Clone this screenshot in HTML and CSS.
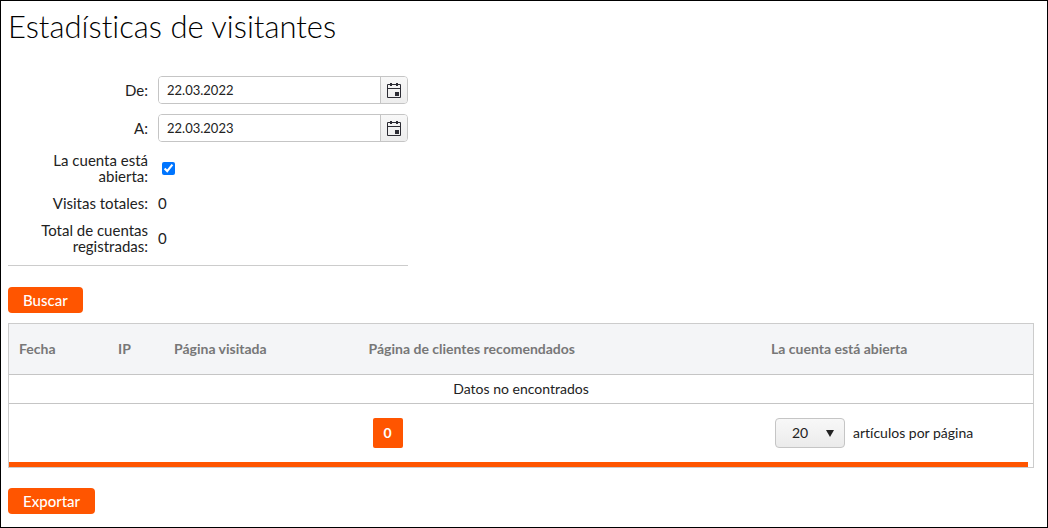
FILE: index.html
```html
<!DOCTYPE html>
<html lang="es">
<head>
  <meta charset="UTF-8">
  <meta name="viewport" content="width=device-width, initial-scale=1.0">
  <title>Estadísticas de visitantes</title>
  <link rel="stylesheet" href="styles.css">
</head>
<body>
  <main class="page">
    <h1>Estadísticas de visitantes</h1>

    <form class="filter" id="filterForm">
      <div class="row">
        <label for="dateFrom">De:</label>
        <div class="datepicker">
          <input type="text" id="dateFrom" value="22.03.2022">
          <button type="button" aria-label="Abrir calendario">
            <svg width="14" height="16" viewBox="0 0 14 16">
              <path d="M.5 2.5h13v13H.5zM.5 6.500h13" fill="none" stroke="#2b2b33"/>
              <path d="M3 1h2v3H3zM9 1h2v3H9zM8 10h4v4H8z" fill="#2b2b33"/>
            </svg>
          </button>
        </div>
      </div>
      <div class="row">
        <label for="dateTo">A:</label>
        <div class="datepicker">
          <input type="text" id="dateTo" value="22.03.2023">
          <button type="button" aria-label="Abrir calendario">
            <svg width="14" height="16" viewBox="0 0 14 16">
              <path d="M.5 2.5h13v13H.5zM.5 6.500h13" fill="none" stroke="#2b2b33"/>
              <path d="M3 1h2v3H3zM9 1h2v3H9zM8 10h4v4H8z" fill="#2b2b33"/>
            </svg>
          </button>
        </div>
      </div>
      <div class="row">
        <label for="accountOpen">La cuenta está abierta:</label>
        <input type="checkbox" id="accountOpen" checked>
      </div>
      <div class="row">
        <span class="name">Visitas totales:</span>
        <span>0</span>
      </div>
      <div class="row">
        <span class="name">Total de cuentas registradas:</span>
        <span>0</span>
      </div>
    </form>

    <button type="submit" form="filterForm" class="btn">Buscar</button>

    <div class="grid">
      <table>
        <colgroup>
          <col class="col-date">
          <col class="col-ip">
          <col class="col-page">
          <col class="col-referral">
          <col class="col-open">
        </colgroup>
        <thead>
          <tr>
            <th>Fecha</th>
            <th>IP</th>
            <th>Página visitada</th>
            <th>Página de clientes recomendados</th>
            <th>La cuenta está abierta</th>
          </tr>
        </thead>
        <tbody>
          <tr>
            <td colspan="5">Datos no encontrados</td>
          </tr>
        </tbody>
        <tfoot>
          <tr>
            <td colspan="3"></td>
            <td><button type="button" class="page-number">0</button></td>
            <td>
              <div class="page-size">
                <div class="select">
                  <select id="pageSize">
                    <option>20</option>
                  </select>
                  <svg width="8" height="7" viewBox="0 0 8 7"><path d="M0 0h8L4 7z" fill="#222"/></svg>
                </div>
                <label for="pageSize">artículos por página</label>
              </div>
            </td>
          </tr>
        </tfoot>
      </table>
      <div class="grid-bar"></div>
    </div>

    <button type="button" class="btn">Exportar</button>
  </main>
</body>
</html>
```

FILE: styles.css
```css
* {
  box-sizing: border-box;
}
body {
  margin: 0;
  background-color: #ffffff;
  color: #222222;
  font-family: Lato, "Open Sans", sans-serif;
  font-size: 15px;
  font-variant-ligatures: none;
  line-height: 16px;
}
input, button, select {
  font-family: inherit;
  color: inherit;
}
.page {
  min-height: 100vh;
  padding: 7px 13px 13px 7px;
  border: 1px solid #000000;
}
h1 {
  margin: 0 0 32px;
  color: #000000;
  font-size: 31px;
  font-weight: 300;
  line-height: 36px;
}

.filter {
  display: flex;
  flex-direction: column;
  gap: 10px;
  width: 400px;
  max-width: 100%;
  padding-bottom: 11px;
  margin-bottom: 21px;
  border-bottom: 1px solid #cccccc;
}
.row {
  display: grid;
  grid-template-columns: 140px 1fr;
  column-gap: 10px;
  align-items: center;
  min-height: 18px;
}
.row label, .row .name {
  padding-left: 20px;
  text-align: right;
}
.row input[type="checkbox"] {
  width: 13px;
  height: 13px;
  margin: 0 4px;
}

.datepicker {
  display: flex;
  height: 28px;
  border: 1px solid #c5c5c5;
  border-radius: 4px;
  overflow: hidden;
}
.datepicker input {
  flex: 1;
  min-width: 0;
  padding: 0 8px;
  border: 0;
  font-size: 13px;
}
.datepicker button {
  display: flex;
  align-items: center;
  justify-content: center;
  width: 27px;
  padding: 0;
  border: 0;
  border-left: 1px solid #c5c5c5;
  background: linear-gradient(#f8f8f8, #ededed);
}

.btn {
  display: block;
  height: 26px;
  padding: 0 15px;
  border: 0;
  border-radius: 4px;
  background-color: #ff5500;
  color: #ffffff;
  font-size: 15px;
  font-weight: 500;
}

.grid {
  margin: 10px 0 20px;
  border: 1px solid #cccccc;
}
table {
  width: 100%;
  table-layout: fixed;
  border-collapse: collapse;
}
.col-date {
  width: 99px;
}
.col-ip {
  width: 56px;
}
.col-page {
  width: 19%;
}
.col-open {
  width: 272px;
}
th {
  height: 50px;
  padding: 0 10px;
  background-color: #f4f5f7;
  border-bottom: 1px solid #c5c5c5;
  color: #777777;
  font-size: 14px;
  text-align: left;
}
tbody td {
  height: 29px;
  padding: 0;
  border-bottom: 1px solid #c5c5c5;
  font-size: 14px;
  text-align: center;
}
tfoot td {
  height: 59px;
  padding: 0 14px;
}
.page-number {
  display: block;
  width: 30px;
  height: 30px;
  padding: 0;
  border: 0;
  border-radius: 2px;
  background-color: #ff5500;
  color: #ffffff;
  font-size: 14px;
  font-weight: bold;
}
.page-size {
  display: flex;
  align-items: center;
  gap: 8px;
  font-size: 14px;
}
.select {
  position: relative;
}
.select select {
  appearance: none;
  display: block;
  width: 70px;
  height: 30px;
  padding: 0 16px;
  border: 1px solid #c5c5c5;
  border-radius: 4px;
  background: linear-gradient(#f8f8f8, #ebebeb);
  font-size: 14px;
}
.select svg {
  position: absolute;
  top: 12px;
  right: 11px;
  pointer-events: none;
}
.grid-bar {
  height: 5px;
  margin-right: 5px;
  background-color: #ff5500;
}
```
